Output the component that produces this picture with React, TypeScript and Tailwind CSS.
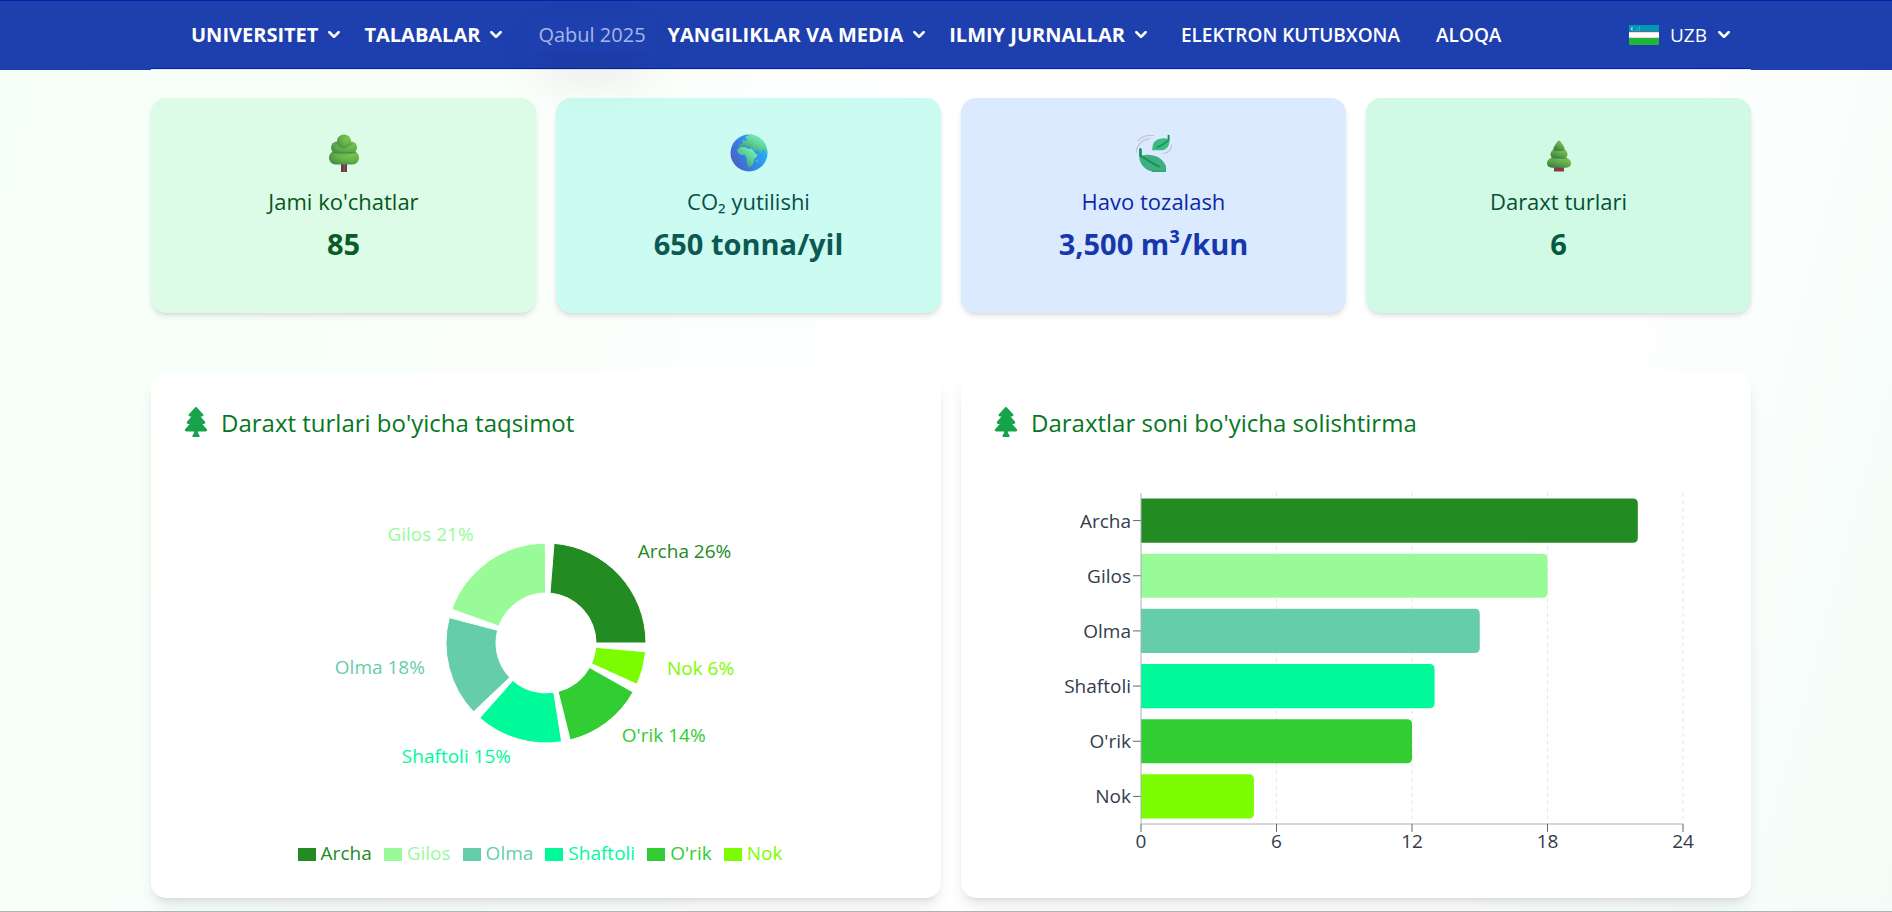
import type { ReactNode } from "react";
import { FaTree } from "react-icons/fa";

type Species = { name: string; count: number; percent: number; color: string };

const SPECIES: Species[] = [
  { name: "Archa", count: 22, percent: 26, color: "#228b22" },
  { name: "Gilos", count: 18, percent: 21, color: "#98fb98" },
  { name: "Olma", count: 15, percent: 18, color: "#66cdaa" },
  { name: "Shaftoli", count: 13, percent: 15, color: "#00fa9a" },
  { name: "O'rik", count: 12, percent: 14, color: "#32cd32" },
  { name: "Nok", count: 5, percent: 6, color: "#7cfc00" },
];

function Chevron() {
  return (
    <svg viewBox="5 7 10 6" className="mb-0.5 h-[7px] w-3 shrink-0" fill="currentColor" stroke="currentColor" strokeWidth="0.3" aria-hidden="true">
      <path d="M5.293 7.293a1 1 0 011.414 0L10 10.586l3.293-3.293a1 1 0 111.414 1.414l-4 4a1 1 0 01-1.414 0l-4-4a1 1 0 010-1.414z" />
    </svg>
  );
}

function NavMenu({ label }: { label: string }) {
  return (
    <button type="button" className="flex items-center gap-2.5 px-3 font-bold">
      {label}
      <Chevron />
    </button>
  );
}

function UzFlag() {
  return (
    <svg viewBox="0 0 30 20" className="h-5 w-[30px]" aria-hidden="true">
      <rect width="30" height="20" fill="#fff" />
      <rect width="30" height="7" fill="#0099b5" />
      <rect y="6.6" width="30" height="0.6" fill="#b0455a" />
      <rect y="12.8" width="30" height="0.6" fill="#b0455a" />
      <rect y="13" width="30" height="7" fill="#1eb53a" />
      <path d="M4.2 1.8a2 2 0 1 0 0 4 2.4 2.4 0 0 1 0-4z" fill="#fff" />
      <g fill="#fff" opacity="0.8">
        <circle cx="6.5" cy="5.2" r="0.4" />
        <circle cx="8.5" cy="5.2" r="0.4" />
        <circle cx="10.5" cy="5.2" r="0.4" />
        <circle cx="8.5" cy="3.6" r="0.4" />
        <circle cx="10.5" cy="3.6" r="0.4" />
        <circle cx="10.5" cy="2" r="0.4" />
      </g>
    </svg>
  );
}

function Header() {
  return (
    <header className="relative z-10 border-t border-[#0420a6] bg-[#1e40af] pl-2.5 text-white">
      <div className="mx-auto flex h-[69px] max-w-[1600px] items-center justify-between border-b border-[#dfe8f4] pr-[21px] pl-7 shadow-[inset_0_-1px_0_#0420a6]">
        <nav className="flex items-center text-[20px] leading-6">
          <NavMenu label="UNIVERSITET" />
          <NavMenu label="TALABALAR" />
          <a href="#qabul" className="ml-3.5 px-2.5 py-1.5 text-[#a6b6e6] shadow-2xl">
            Qabul 2025
          </a>
          <NavMenu label="YANGILIKLAR VA MEDIA" />
          <NavMenu label="ILMIY JURNALLAR" />
          <a href="#kutubxona" className="ml-1 px-[18px] text-[19px] font-semibold">
            ELEKTRON KUTUBXONA
          </a>
          <a href="#aloqa" className="px-[18px] text-[19px] font-semibold">
            ALOQA
          </a>
        </nav>
        <button type="button" className="flex items-center gap-[11px] text-[19px] leading-6">
          <UzFlag />
          UZB
          <Chevron />
        </button>
      </div>
    </header>
  );
}

function RoundTree() {
  return (
    <svg viewBox="0 0 38 38" className="size-[38px]" aria-hidden="true">
      <defs>
        <radialGradient id="leafRound" cx="0.7" cy="0.3" r="0.8">
          <stop offset="0" stopColor="#7cc453" />
          <stop offset="0.6" stopColor="#5fae46" />
          <stop offset="1" stopColor="#468a4c" />
        </radialGradient>
      </defs>
      <rect x="16" y="28" width="6" height="10" fill="#6f3a44" />
      <rect x="18.5" y="28" width="1.5" height="10" fill="#8c5058" />
      <rect x="4" y="17" width="30" height="13.5" rx="6.5" fill="url(#leafRound)" />
      <rect x="6" y="7.5" width="26" height="12" rx="6" fill="url(#leafRound)" />
      <circle cx="19" cy="7.5" r="7" fill="url(#leafRound)" />
      <path d="M7 18.2q12 2 24 0" stroke="#458f3c" strokeWidth="0.9" fill="none" />
      <path d="M11 8.8q2 1.6 4 1.3M23 11.5q3-.3 4-2" stroke="#4b963f" strokeWidth="0.8" fill="none" />
    </svg>
  );
}

function Globe() {
  return (
    <svg viewBox="0 0 38 38" className="size-[38px]" aria-hidden="true">
      <defs>
        <linearGradient id="sea" x1="0.95" y1="0.3" x2="0.1" y2="0.75">
          <stop offset="0" stopColor="#28b4fb" />
          <stop offset="0.55" stopColor="#3287e6" />
          <stop offset="1" stopColor="#4a62cc" />
        </linearGradient>
        <linearGradient id="land" x1="0.9" y1="0.1" x2="0.3" y2="0.8">
          <stop offset="0" stopColor="#78fcb2" />
          <stop offset="0.5" stopColor="#5fd49c" />
          <stop offset="1" stopColor="#4aa582" />
        </linearGradient>
        <clipPath id="globeClip">
          <circle cx="19" cy="19" r="18.5" />
        </clipPath>
      </defs>
      <circle cx="19" cy="19" r="18.5" fill="url(#sea)" />
      <g clipPath="url(#globeClip)" fill="url(#land)">
        <path d="M15.500 2.500L19 1h7l8 4 4 8v5l-2 1.500-1.500-4-1.500-.5-1.500 3.500-1.500.8-1.500-3-1-1-2 1.800-2-.8-1-2.500h-2.500l-.5-1.500h-2l-1 1-1.500-2-2.500 1-1 1.500-2.500-.3.3-2.700 2.700-.8 1-1.500-1-1.500 2-1.500 1 1.500 2-.5 0-1.500-1.500-.5z" />
        <path d="M8.500 14.500l3-1.500 4.500.2 1.500 1.300 4 .3 2 2 2 3 1.800.5-.3 2-3 3-.5 3-1 2.500-2 2-2 .2-1.300-2.800-.7-3.500.5-2-1.500-2.500-.5-1.500-4 .3-3-2-.8-2.800z" />
        <path d="M26.300 25.500l1.300 1-.8 2.500-1-.5z" />
      </g>
    </svg>
  );
}

function WindLeaves() {
  return (
    <svg viewBox="0 0 38 38" className="size-[38px]" aria-hidden="true">
      <g stroke="#c9bfdc" strokeWidth="1.200" fill="none" strokeLinecap="round">
        <path d="M3 6.500Q9 .5 18.500 1.500" />
        <path d="M1 18.500Q3 6 15 4.500" />
        <path d="M36.500 11q0 7.500-8.500 8.500" />
      </g>
      <path d="M32.500 .8h2v5.700q0 8.500-7 9.700H17q0-11 9.500-11.800 4-.4 6 .4z" fill="#3dba80" />
      <path d="M33.700 1v5q-5 5-12 7.500" stroke="#12915a" strokeWidth="1.400" fill="none" />
      <path d="M4 15h3v6.500Q12 20 18.500 21.500 28 24 31 32v5.500H17Q4.500 34 4 21z" fill="#3fae80" />
      <path d="M5.300 15v6.500q9 6 18.500 11" stroke="#10935a" strokeWidth="2" fill="none" strokeLinecap="round" />
      <path d="M17 37.300h14" stroke="#12a05f" strokeWidth="1" />
    </svg>
  );
}

function PineTree() {
  return (
    <svg viewBox="0 0 38 38" className="size-[38px]" aria-hidden="true">
      <defs>
        <linearGradient id="leafPine" x1="0.8" y1="0.1" x2="0.2" y2="1">
          <stop offset="0" stopColor="#7cc455" />
          <stop offset="0.6" stopColor="#559f46" />
          <stop offset="1" stopColor="#3d7748" />
        </linearGradient>
      </defs>
      <rect x="14" y="32" width="10" height="5.500" fill="#8b3a46" />
      <path d="M12 23.500h14q5 2 5 5.500 0 4.500-5 4.700H12q-5-.2-5-4.700 0-3.500 5-5.500z" fill="url(#leafPine)" />
      <path d="M14 14.500h10q3.500 3 3.500 5.500 0 3.800-4 4h-9q-4-.2-4-4 0-2.500 3.500-5.500z" fill="url(#leafPine)" />
      <path d="M19 6.500q1.500 0 2.500 2.500 3 4 3 5.500 0 1.800-3 1.800h-5q-3 0-3-1.800 0-1.500 3-5.500 1-2.500 2.500-2.500z" fill="url(#leafPine)" />
      <path d="M14 16.300h10M11 24.200h16" stroke="#3f8539" strokeWidth="0.900" />
    </svg>
  );
}

type StatProps = { icon: ReactNode; label: string; value: string; card: string; labelColor: string; valueColor: string };

function StatCard({ icon, label, value, card, labelColor, valueColor }: StatProps) {
  return (
    <article className={`flex h-[215px] flex-col items-center rounded-[15px] pt-9 text-center shadow-md ${card}`}>
      {icon}
      <h3 className={`mt-3.5 text-[22px] leading-[30px] font-medium ${labelColor}`}>{label}</h3>
      <p className={`mt-2 text-[29px] leading-10 font-bold ${valueColor}`}>{value}</p>
    </article>
  );
}

function Panel({ title, children }: { title: string; children: ReactNode }) {
  return (
    <section className="flex h-[525px] flex-col rounded-[15px] bg-white shadow-lg">
      <div className="flex items-center gap-2.5 px-[30px] pt-[30px]">
        <FaTree className="size-[30px] text-[#16a34a]" />
        <h2 className="pt-0.5 text-[24px] leading-9 font-medium text-[#067722]">{title}</h2>
      </div>
      {children}
    </section>
  );
}

const CX = 216;
const CY = 143;
const PAD = 5;

function polar(radius: number, degrees: number) {
  const a = (degrees * Math.PI) / 180;
  return { x: CX + radius * Math.cos(a), y: CY - radius * Math.sin(a) };
}

function DonutChart() {
  const total = SPECIES.reduce((sum, s) => sum + s.count, 0);
  let angle = 0;
  const slices = SPECIES.map((s) => {
    const start = angle;
    const end = start + (s.count / total) * (360 - PAD * SPECIES.length);
    angle = end + PAD;
    const a = polar(100, start);
    const b = polar(100, end);
    const c = polar(50, end);
    const d = polar(50, start);
    return {
      ...s,
      label: polar(125, (start + end) / 2),
      path: `M${a.x} ${a.y}A100 100 0 0 0 ${b.x} ${b.y}L${c.x} ${c.y}A50 50 0 0 1 ${d.x} ${d.y}Z`,
    };
  });
  return (
    <div className="flex flex-1 flex-col items-center">
      <svg viewBox="0 0 432 290" className="mt-[59px] h-[290px] w-[432px]" role="img" aria-label="Daraxt turlari bo'yicha taqsimot">
        {slices.map((s) => (
          <g key={s.name}>
            <path d={s.path} fill={s.color} stroke="#fff" strokeWidth="1" />
            <text x={s.label.x} y={s.label.y} fill={s.color} textAnchor={s.label.x > CX ? "start" : "end"} className="text-[19px]">
              {`${s.name} ${s.percent}%`}
            </text>
          </g>
        ))}
      </svg>
      <ul className="mt-[51px] flex text-[19px] leading-6">
        {SPECIES.map((s) => (
          <li key={s.name} className="mr-3 flex items-center gap-[5px]" style={{ color: s.color }}>
            <span className="mt-0.5 h-[13px] w-[18px] bg-current" />
            {s.name}
          </li>
        ))}
      </ul>
    </div>
  );
}

function BarChart() {
  const left = 150;
  const width = 542;
  const bottom = 341;
  const top = 10;
  const band = (bottom - top) / SPECIES.length;
  return (
    <div className="flex flex-1 justify-start pl-[30px]">
      <svg viewBox="0 0 730 380" className="mt-[42px] h-[380px] w-[730px]" role="img" aria-label="Daraxtlar soni bo'yicha solishtirma">
        {[6, 12, 18, 24].map((t) => (
          <line key={t} x1={left + (t / 24) * width} x2={left + (t / 24) * width} y1={top} y2={bottom} stroke="#e2e4e8" strokeDasharray="3.75 3.75" />
        ))}
        {SPECIES.map((s, i) => {
          const y = top + band * i + band * 0.1;
          const h = band * 0.8;
          const w = (s.count / 24) * width;
          return (
            <g key={s.name}>
              <path d={`M${left} ${y}h${w - 5}q5 0 5 5v${h - 10}q0 5-5 5h${5 - w}z`} fill={s.color} />
              <line x1={left - 8} x2={left} y1={y + h / 2} y2={y + h / 2} stroke="#666" />
              <text x={left - 10} y={y + h / 2 + 7} textAnchor="end" fill="#333c4c" className="text-[19px]">
                {s.name}
              </text>
            </g>
          );
        })}
        <path d={`M${left} ${top}V${bottom}H${left + width}`} fill="none" stroke="#a9afba" />
        {[0, 6, 12, 18, 24].map((t) => {
          const x = left + (t / 24) * width;
          return (
            <g key={t}>
              <line x1={x} x2={x} y1={bottom} y2={bottom + 8} stroke="#666" />
              <text x={x} y={bottom + 24} textAnchor="middle" fill="#333c4c" className="text-[19px]">
                {t}
              </text>
            </g>
          );
        })}
      </svg>
    </div>
  );
}

export default function App() {
  return (
    <div className="min-h-screen overflow-x-hidden border-b border-[#a9b8bf] bg-[linear-gradient(105deg,#f4fff7_0%,#ffffff_50%,#ffffff_78%,#f3fcf7_100%)] font-['Open_Sans','Noto_Sans',sans-serif]">
      <Header />
      <main className="pl-2.5">
        <div className="mx-auto max-w-[1600px] pt-7 pb-[13px]">
          <div className="grid grid-cols-4 gap-5">
            <StatCard icon={<RoundTree />} label="Jami ko'chatlar" value="85" card="bg-[#dcfce7]" labelColor="text-[#07571c]" valueColor="text-[#0a5c26]" />
            <StatCard icon={<Globe />} label="CO₂ yutilishi" value="650 tonna/yil" card="bg-[#ccfbf1]" labelColor="text-[#064f49]" valueColor="text-[#0c5852]" />
            <StatCard icon={<WindLeaves />} label="Havo tozalash" value="3,500 m³/kun" card="bg-[#dbeafe]" labelColor="text-[#0a28a6]" valueColor="text-[#1638ac]" />
            <StatCard icon={<PineTree />} label="Daraxt turlari" value="6" card="bg-[#d1fae5]" labelColor="text-[#045035]" valueColor="text-[#045a41]" />
          </div>
          <div className="mt-[60px] grid grid-cols-2 gap-5">
            <Panel title="Daraxt turlari bo'yicha taqsimot">
              <DonutChart />
            </Panel>
            <Panel title="Daraxtlar soni bo'yicha solishtirma">
              <BarChart />
            </Panel>
          </div>
        </div>
      </main>
    </div>
  );
}
